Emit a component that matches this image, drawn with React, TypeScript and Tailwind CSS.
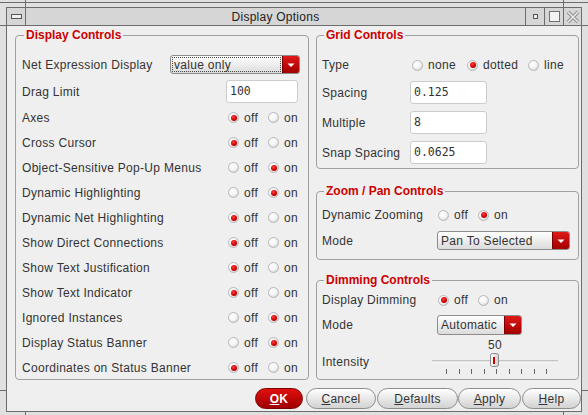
import React from "react";

const LBL = "text-[12px] leading-[14px] tracking-[0.3px] text-[#333] whitespace-nowrap";

function Radio({ checked }: { checked?: boolean }) {
  return (
    <span className="inline-flex w-[11px] h-[11px] shrink-0 items-center justify-center rounded-full border border-[#b8b8b8] bg-[radial-gradient(circle_at_40%_35%,#ffffff_0%,#f6f6f6_45%,#c4c4c4_100%)]">
      {checked && (
        <span className="w-[6px] h-[6px] rounded-full bg-[radial-gradient(circle_at_40%_35%,#ff4040_0%,#d00000_55%,#8c0000_100%)]" />
      )}
    </span>
  );
}

function Opt({ label, checked, w }: { label: string; checked?: boolean; w?: string }) {
  return (
    <span className={`flex items-center gap-[5px] ${w ?? ""}`}>
      <Radio checked={checked} />
      <span className={LBL}>{label}</span>
    </span>
  );
}

function OffOn({ on }: { on: boolean }) {
  return (
    <div className="flex items-center">
      <Opt label="off" checked={!on} w="w-[40px]" />
      <Opt label="on" checked={on} />
    </div>
  );
}

function Arrow() {
  return (
    <div className="w-[17px] shrink-0 flex items-center justify-center border-l border-[#7a0000] bg-linear-to-b from-[#e01818] to-[#a20000]">
      <svg width="8" height="6" viewBox="0 0 8 6">
        <path d="M0.5 1.5H7.5L4 5Z" fill="#ffffff" />
      </svg>
    </div>
  );
}

function Dropdown({ text, w, h, focused }: { text: string; w: string; h: string; focused?: boolean }) {
  return (
    <div className={`flex ${w} ${h} rounded-[3px] border border-[#8c8c8c] overflow-hidden bg-linear-to-b from-[#ffffff] to-[#dcdcdc]`}>
      <div className="flex-1 flex items-stretch p-[1px] min-w-0">
        <span
          className={`flex-1 flex items-center pl-[1px] ${LBL} ${
            focused ? "border border-dotted border-[#444]" : "border border-transparent"
          }`}
        >
          {text}
        </span>
      </div>
      <Arrow />
    </div>
  );
}

function Input({ value, w }: { value: string; w: string }) {
  return (
    <div className={`${w} h-[23px] shrink-0 flex items-center pl-[3px] bg-white border border-[#cccccc] rounded-[3px] font-['DejaVu_Sans_Mono',monospace] text-[11.5px] text-[#333]`}>
      {value}
    </div>
  );
}

function Btn({ children, w, ml, primary }: { children: React.ReactNode; w: string; ml: string; primary?: boolean }) {
  return (
    <div
      className={`${w} ${ml} h-[21px] rounded-full flex items-center justify-center text-[12px] tracking-[0.3px] ${
        primary
          ? "border border-[#7a0000] bg-linear-to-b from-[#e01010] to-[#a00000] text-white font-bold"
          : "border border-[#8c8c8c] bg-linear-to-b from-[#ffffff] to-[#d2d2d2] text-[#333]"
      }`}
    >
      {children}
    </div>
  );
}

const leftRows: [string, boolean][] = [
  ["Axes", false],
  ["Cross Cursor", false],
  ["Object-Sensitive Pop-Up Menus", true],
  ["Dynamic Highlighting", true],
  ["Dynamic Net Highlighting", false],
  ["Show Direct Connections", false],
  ["Show Text Justification", false],
  ["Show Text Indicator", false],
  ["Ignored Instances", true],
  ["Display Status Banner", true],
  ["Coordinates on Status Banner", false],
];

const LEG = "px-[2px] text-[12px] leading-[14px] font-bold text-[#cc0000] whitespace-nowrap";
const FS = "border border-[#a0a0a0] rounded-[4px] min-w-0";

export default function App() {
  const ticks = [0, 1, 2, 3, 4, 5, 6, 7, 8].map((k) => Math.round(14 + 12.5 * k) + 0.5);
  return (
    <div className="relative w-[588px] h-[415px] overflow-hidden bg-[#e0e0e0] font-['Liberation_Sans',Arial,sans-serif]">
      {/* frame decorations */}
      <div className="absolute left-0 top-[2px] w-[588px] h-px bg-[#6c6c6c]" />
      <div className="absolute left-[25px] top-0 w-px h-[7px] bg-[#6c6c6c]" />
      <div className="absolute left-[563px] top-0 w-px h-[7px] bg-[#6c6c6c]" />
      <div className="absolute left-0 top-[25px] w-[6px] h-px bg-[#6c6c6c]" />
      <div className="absolute left-[582px] top-[25px] w-[6px] h-px bg-[#6c6c6c]" />
      <div className="absolute left-0 top-[390px] w-[6px] h-px bg-[#6c6c6c]" />
      <div className="absolute left-[582px] top-[390px] w-[6px] h-px bg-[#6c6c6c]" />
      <div className="absolute left-[25px] top-[412px] w-px h-[3px] bg-[#6c6c6c]" />
      <div className="absolute left-[563px] top-[412px] w-px h-[3px] bg-[#6c6c6c]" />

      <div className="pt-[7px] px-[6px]">
        <div className="h-[405px] border border-[#6c6c6c] flex flex-col bg-[#efefef]">
          {/* title bar */}
          <div className="h-[18px] shrink-0 flex border-b border-[#6c6c6c] bg-[#d6d6d6]">
            <div className="w-[19px] border-r border-[#6c6c6c] flex items-center justify-center">
              <div className="w-[11px] h-[5px] border border-[#555] bg-[#f0f0f0]" />
            </div>
            <div className="flex-1 flex items-center justify-center text-[12px] tracking-[0.25px] text-[#222]">
              Display Options
            </div>
            <div className="w-[19px] border-l border-[#6c6c6c] flex items-center justify-center">
              <div className="w-[5px] h-[5px] border border-[#555] bg-[#f0f0f0]" />
            </div>
            <div className="w-[19px] border-l border-[#6c6c6c] flex items-center justify-center">
              <div className="w-[11px] h-[11px] border border-[#707070] bg-[#f2f2f2]" />
            </div>
            <div className="w-[18px] border-l border-[#6c6c6c] flex items-center justify-center">
              <svg width="14" height="14" viewBox="0 0 14 14">
                <path d="M2 2L12 12M12 2L2 12" stroke="#8a8a8a" strokeWidth="3.4" />
                <path d="M2 2L12 12M12 2L2 12" stroke="#ececec" strokeWidth="1.5" />
              </svg>
            </div>
          </div>

          {/* content */}
          <div className="flex-1 flex flex-col pl-[8px] pt-[2px]">
            <div className="flex gap-[7px]">
              {/* Display Controls */}
              <fieldset className={`${FS} w-[294px] h-[352px]`}>
                <legend className={`ml-[8px] ${LEG}`}>Display Controls</legend>
                <div className="pt-[9px] pl-[6px] pr-[8px]">
                  <div className="h-[27px] flex items-center">
                    <span className={LBL}>Net Expression Display</span>
                    <div className="ml-auto">
                      <Dropdown text="value only" w="w-[130px]" h="h-[19px]" focused />
                    </div>
                  </div>
                  <div className="h-[27px] flex items-center">
                    <span className={`${LBL} w-[204px]`}>Drag Limit</span>
                    <Input value="100" w="w-[72px]" />
                  </div>
                  {leftRows.map(([label, on]) => (
                    <div key={label} className="h-[25px] flex items-center">
                      <span className={`${LBL} w-[206px]`}>{label}</span>
                      <OffOn on={on} />
                    </div>
                  ))}
                </div>
              </fieldset>

              {/* right column */}
              <div className="w-[263px] flex flex-col">
                <fieldset className={`${FS} h-[141px]`}>
                  <legend className={`ml-[7px] ${LEG}`}>Grid Controls</legend>
                  <div className="pt-[10px] pl-[5px]">
                    <div className="h-[26px] flex items-center">
                      <span className={`${LBL} w-[90px]`}>Type</span>
                      <Opt label="none" w="w-[55px]" />
                      <Opt label="dotted" checked w="w-[61px]" />
                      <Opt label="line" />
                    </div>
                    <div className="mt-[3px] flex flex-col gap-[7px]">
                      {[
                        ["Spacing", "0.125"],
                        ["Multiple", "8"],
                        ["Snap Spacing", "0.0625"],
                      ].map(([l, v]) => (
                        <div key={l} className="h-[23px] flex items-center">
                          <span className={`${LBL} w-[88px]`}>{l}</span>
                          <Input value={v} w="w-[77px]" />
                        </div>
                      ))}
                    </div>
                  </div>
                </fieldset>

                <fieldset className={`${FS} h-[76px] mt-[15px]`}>
                  <legend className={`ml-[7px] ${LEG}`}>Zoom / Pan Controls</legend>
                  <div className="pt-[7px] pl-[5px]">
                    <div className="h-[20px] flex items-center">
                      <span className={`${LBL} w-[116px]`}>Dynamic Zooming</span>
                      <OffOn on={true} />
                    </div>
                    <div className="mt-[6px] flex items-center">
                      <span className={`${LBL} w-[115px]`}>Mode</span>
                      <Dropdown text="Pan To Selected" w="w-[133px]" h="h-[19px]" />
                    </div>
                  </div>
                </fieldset>

                <fieldset className={`${FS} h-[107px] mt-[13px]`}>
                  <legend className={`ml-[7px] ${LEG}`}>Dimming Controls</legend>
                  <div className="pt-[3px] pl-[5px]">
                    <div className="h-[20px] flex items-center">
                      <span className={`${LBL} w-[116px]`}>Display Dimming</span>
                      <OffOn on={false} />
                    </div>
                    <div className="mt-[5px] flex items-center">
                      <span className={`${LBL} w-[115px]`}>Mode</span>
                      <Dropdown text="Automatic" w="w-[85px]" h="h-[20px]" />
                    </div>
                    <div className="mt-[2px] flex items-start">
                      <span className={`${LBL} w-[110px] pt-[18px]`}>Intensity</span>
                      <div className="w-[126px] flex flex-col">
                        <div className="h-[16px] leading-[16px] text-center text-[12px] tracking-[0.3px] text-[#333]">50</div>
                        <svg width="126" height="24" viewBox="0 0 126 24">
                          <rect x="0" y="7.5" width="126" height="1" fill="#9a9a9a" />
                          <rect x="0" y="8.5" width="126" height="1" fill="#ffffff" />
                          {ticks.map((x) => (
                            <line key={x} x1={x} y1="16" x2={x} y2="21" stroke="#666" strokeWidth="1" />
                          ))}
                          <defs>
                            <linearGradient id="th" x1="0" y1="0" x2="1" y2="0">
                              <stop offset="0" stopColor="#ffffff" />
                              <stop offset="1" stopColor="#cfcfcf" />
                            </linearGradient>
                          </defs>
                          <rect x="58.5" y="0.5" width="8" height="13" rx="2" fill="url(#th)" stroke="#8a8a8a" />
                          <rect x="61" y="4" width="2" height="7" fill="#c40000" />
                        </svg>
                      </div>
                    </div>
                  </div>
                </fieldset>
              </div>
            </div>

            {/* buttons */}
            <div className="mt-[8px] flex justify-end">
              <Btn w="w-[48px]" ml="ml-0" primary>
                <span className="underline">O</span>K
              </Btn>
              <Btn w="w-[70px]" ml="ml-[3px]">
                <span className="underline">C</span>ancel
              </Btn>
              <Btn w="w-[81px]" ml="ml-[1px]">
                <span className="underline">D</span>efaults
              </Btn>
              <Btn w="w-[63px]" ml="ml-0">
                <span className="underline">A</span>pply
              </Btn>
              <Btn w="w-[59px]" ml="ml-[1px]">
                <span className="underline">H</span>elp
              </Btn>
            </div>
          </div>
        </div>
      </div>
    </div>
  );
}
